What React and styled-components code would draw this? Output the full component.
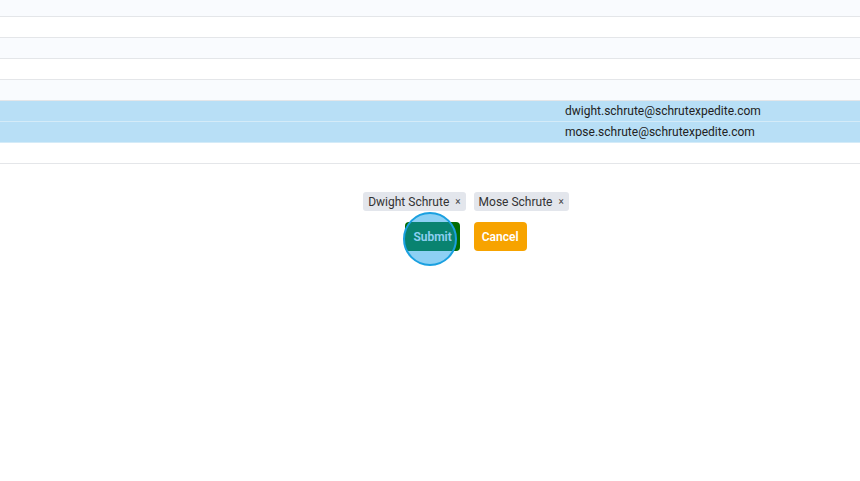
import React from 'react';
import styled, { createGlobalStyle } from 'styled-components';

const GlobalStyle = createGlobalStyle`
  html, body {
    margin: 0;
    padding: 0;
    background: #ffffff;
    font-family: Roboto, "Liberation Sans", Arial, sans-serif;
  }
`;

const rows = [
  { email: '', selected: false },
  { email: '', selected: false },
  { email: '', selected: false },
  { email: '', selected: false },
  { email: '', selected: false },
  { email: 'dwight.schrute@schrutexpedite.com', selected: true },
  { email: 'mose.schrute@schrutexpedite.com', selected: true },
  { email: '', selected: false },
];

const chips = ['Dwight Schrute', 'Mose Schrute'];

const App = () => (
  <>
    <GlobalStyle />
    <Page>
      <Table>
        {rows.map((row, i) => (
          <Row key={i} striped={i % 2 === 0} selected={row.selected}>
            <Cell />
            <EmailCell>{row.email}</EmailCell>
          </Row>
        ))}
      </Table>
      <Footer>
        <ChipList>
          {chips.map((name) => (
            <Chip key={name}>
              {name}
              <ChipClose>×</ChipClose>
            </Chip>
          ))}
        </ChipList>
        <Actions>
          <SubmitWrap>
            <Button color="#036b03">Submit</Button>
            <ClickMarker />
          </SubmitWrap>
          <Button color="#f7a300">Cancel</Button>
        </Actions>
      </Footer>
    </Page>
  </>
);

const Page = styled.div`
  width: 860px;
  height: 481px;
  overflow: hidden;
`;

const Table = styled.div`
  margin-top: -4px;
  display: flex;
  flex-direction: column;
`;

const Row = styled.div`
  display: grid;
  grid-template-columns: 565px 1fr;
  height: 20px;
  border-bottom: 1px solid ${(p) => (p.selected ? '#d4ebf8' : '#e4e6e9')};
  background: ${(p) => (p.selected ? '#b8dff6' : p.striped ? '#f9fbfe' : '#ffffff')};
  align-items: center;
`;

const Cell = styled.div``;

const EmailCell = styled.div`
  font-size: 12px;
  color: #222;
  white-space: nowrap;
`;

const Footer = styled.div`
  display: flex;
  flex-direction: column;
  align-items: center;
  padding: 28px 0 0 72px;
  gap: 11px;
`;

const ChipList = styled.div`
  display: flex;
  gap: 8px;
`;

const Chip = styled.span`
  display: inline-flex;
  align-items: center;
  height: 19px;
  padding: 0 5px 0 5px;
  background: #e3e6ec;
  border-radius: 3px;
  font-size: 12px;
  color: #333;
`;

const ChipClose = styled.span`
  margin-left: 6px;
  font-size: 10px;
  color: #444;
`;

const Actions = styled.div`
  display: flex;
  gap: 14px;
`;

const SubmitWrap = styled.div`
  position: relative;
`;

const Button = styled.button`
  height: 29px;
  padding: 0 8px;
  border: none;
  border-radius: 4px;
  background: ${(p) => p.color};
  color: #ffffff;
  font-family: Roboto, "Liberation Sans", Arial, sans-serif;
  font-size: 12px;
  font-weight: 600;
  cursor: pointer;
`;

const ClickMarker = styled.div`
  position: absolute;
  left: -2px;
  top: -10px;
  width: 50px;
  height: 50px;
  border-radius: 50%;
  border: 2px solid #1aa0e0;
  background: rgba(17, 156, 231, 0.48);
  pointer-events: none;
`;

export default App;
